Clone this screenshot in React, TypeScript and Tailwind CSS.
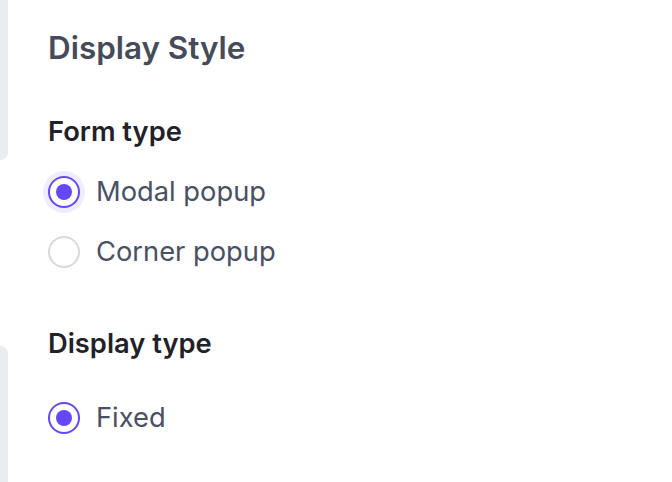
import React from "react";

function Radio({ checked, halo }: { checked?: boolean; halo?: boolean }) {
  return (
    <span
      className={
        "flex h-[32px] w-[32px] shrink-0 items-center justify-center rounded-full border-[2.5px] bg-white " +
        (checked ? "border-[#6349f6] " : "border-[#d9d9de] ") +
        (halo ? "shadow-[0_0_0_5px_#efecfe]" : "")
      }
    >
      {checked && <span className="h-[16px] w-[16px] rounded-full bg-[#6349f6]" />}
    </span>
  );
}

function Option({ label, checked, halo }: { label: string; checked?: boolean; halo?: boolean }) {
  return (
    <div className="flex h-[44px] items-center gap-[16px]">
      <Radio checked={checked} halo={halo} />
      <span className="text-[27.3px] leading-[44px] text-[#4a5063]">{label}</span>
    </div>
  );
}

export default function App() {
  return (
    <div
      className="flex h-[482px] w-[672px] bg-white"
      style={{ fontFamily: 'Inter, "Liberation Sans", Arial, sans-serif' }}
    >
      <div className="flex w-[8px] flex-col justify-between">
        <div className="h-[160px] rounded-br-[10px] bg-[#eaecf0]" />
        <div className="h-[136px] rounded-tr-[10px] bg-[#eaecf0]" />
      </div>
      <div className="flex flex-col pl-[40px]">
        <div className="mt-[28px] h-[40px] text-[31.4px] font-semibold leading-[40px] text-[#454b59]">
          Display Style
        </div>
        <div className="mt-[46px] h-[36px] text-[27.3px] font-semibold leading-[36px] text-[#1f2229]">
          Form type
        </div>
        <div className="mt-[20px] flex flex-col gap-[16px]">
          <Option label="Modal popup" checked halo />
          <Option label="Corner popup" />
        </div>
        <div className="mt-[52px] h-[36px] text-[27.3px] font-semibold leading-[36px] text-[#1f2229]">
          Display type
        </div>
        <div className="mt-[34px]">
          <Option label="Fixed" checked />
        </div>
      </div>
    </div>
  );
}
